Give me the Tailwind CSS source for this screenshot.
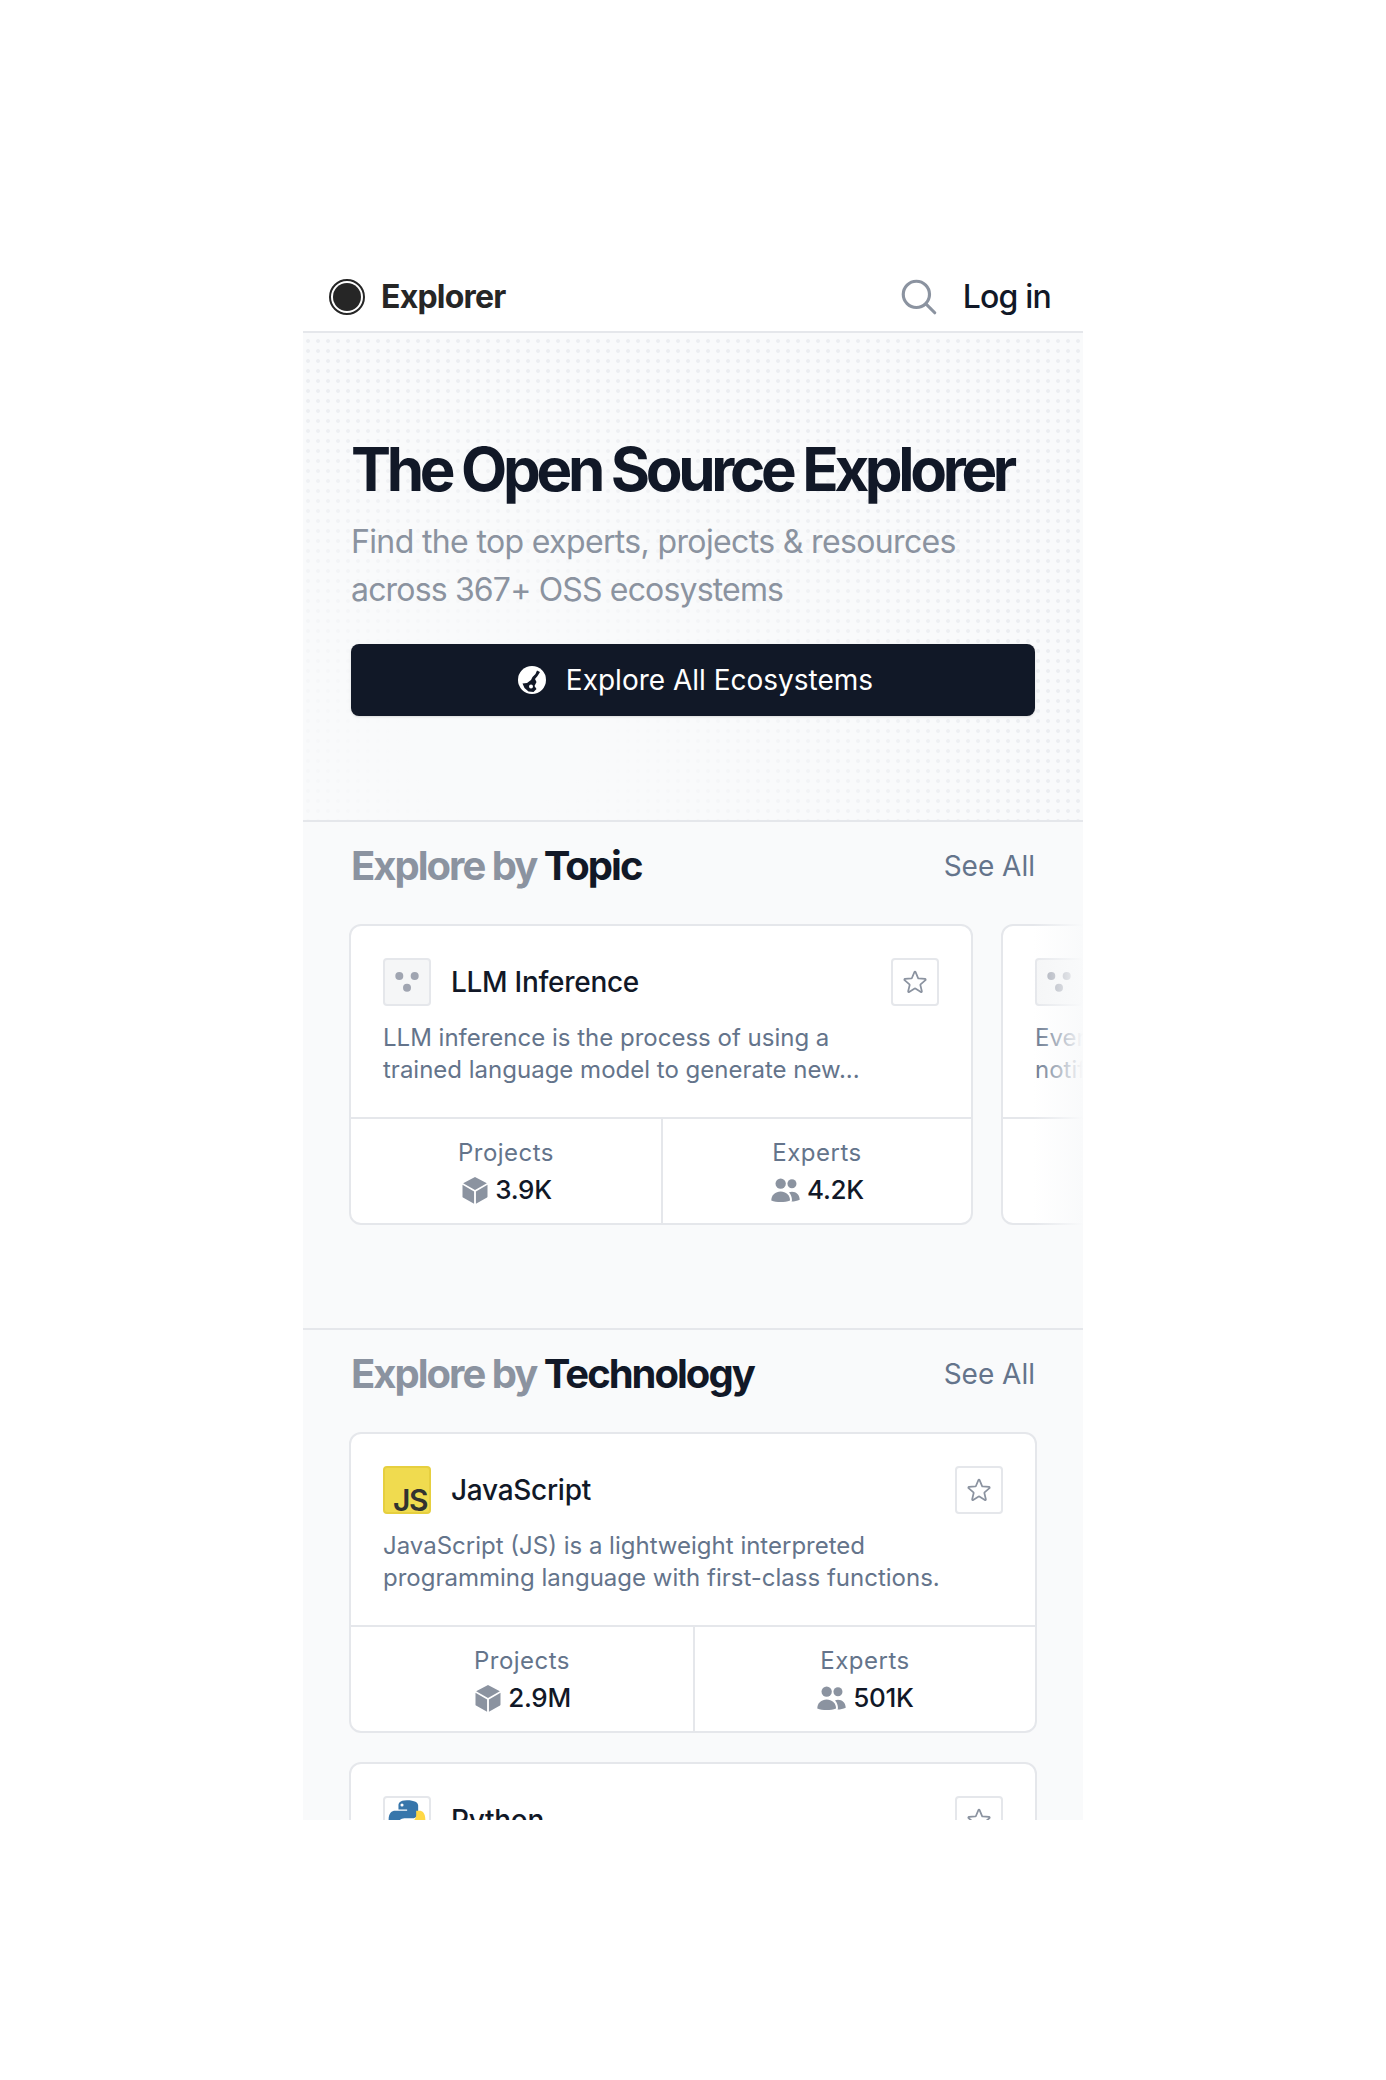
<!DOCTYPE html>
<html lang="en">
<head>
    <meta charset="UTF-8">
    <meta name="viewport" content="width=device-width, initial-scale=1.0">
    <title>Explorer</title>
    <script src="https://cdn.jsdelivr.net/npm/@tailwindcss/browser@4"></script>
</head>
<body class="bg-white font-['Inter',sans-serif] text-[#111827]">
    <div class="pt-[260px] pl-[303px]">
        <div class="w-[780px] h-[1560px] overflow-hidden bg-[#f9fafb]">
            <!-- header -->
            <header class="h-[73px] pt-[2px] bg-white border-b-2 border-[#e5e7eb] flex items-center justify-between pl-[26px] pr-[32px]">
                <div class="flex items-center gap-[16px]">
                    <svg class="w-[36px] h-[36px]" viewBox="0 0 36 36"><circle cx="18" cy="18" r="17" fill="#fff" stroke="#262626" stroke-width="2"/><circle cx="18" cy="18" r="14" fill="#262626"/></svg>
                    <span class="text-[32px] font-bold tracking-[-0.025em] text-[#262626]">Explorer</span>
                </div>
                <div class="flex items-center gap-[23px]">
                    <svg class="w-[42px] h-[42px] text-[#8b93a0]" fill="none" viewBox="0 0 24 24" stroke="currentColor" stroke-width="1.8"><path stroke-linecap="round" stroke-linejoin="round" d="M21 21l-5.197-5.197m0 0A7.5 7.5 0 105.196 5.196a7.5 7.5 0 0010.607 10.607z"/></svg>
                    <span class="text-[32px] font-medium tracking-[-0.025em] text-[#111827]">Log in</span>
                </div>
            </header>

            <!-- hero -->
            <section class="relative h-[489px] border-b-2 border-[#e5e7eb] px-[46px] pt-[106px]">
                <div class="absolute inset-0 bg-[radial-gradient(#eceef1_1.5px,transparent_2.3px)] bg-[length:10px_10px] bg-[position:0_3px]"></div>
                <div class="absolute inset-0 bg-[radial-gradient(ellipse_at_25%_85%,#f9fafb_10%,transparent_65%)]"></div>
                <div class="relative">
                    <h1 class="ml-[2px] text-[60px] leading-[60px] font-bold tracking-[-0.072em] text-[#111827] whitespace-nowrap">The Open Source Explorer</h1>
                    <p class="ml-[2px] mt-[19px] text-[32px] leading-[48px] tracking-[-0.02em] text-[#8b93a0]">Find the top experts, projects &amp; resources<br><span class="tracking-[-0.026em]">across 367+ OSS ecosystems</span></p>
                    <button class="mt-[30px] ml-[2px] pl-[5px] w-[684px] h-[72px] rounded-[8px] bg-[#111827] text-white text-[28px] flex items-center justify-center gap-[20px] shadow-sm">
                        <svg class="w-[28px] h-[28px]" viewBox="0 0 28 28"><circle cx="14" cy="14" r="14" fill="#fff"/><path d="M22 6l-3-1.500-1.500 3.500-3 3-1.500 3-4 3-4.500.5 2 4.500 4 3.500 5 .5 3-3-2-3 2-4-1.500-3 2.500-3z" fill="#111827"/><circle cx="13" cy="20.500" r="2" fill="#fff"/></svg>
                        Explore All Ecosystems
                    </button>
                </div>
            </section>

            <!-- topics -->
            <section class="h-[508px] border-b-2 border-[#e5e7eb] pt-[22px]">
                <div class="flex items-center justify-between px-[48px] h-[44px]">
                    <h2 class="text-[40px] font-bold tracking-[-0.05em] text-[#8b93a0]">Explore by <span class="text-[#111827]">Topic</span></h2>
                    <a class="text-[28px] text-[#64748b]">See All</a>
                </div>
                <div class="relative mt-[36px] flex gap-[28px] pl-[46px] overflow-hidden">
                    <div class="w-[624px] shrink-0 h-[301px] bg-white border-2 border-[#e5e7eb] rounded-[12px] flex flex-col">
                        <div class="px-[32px] pt-[32px] flex-1">
                            <div class="flex items-center justify-between">
                                <div class="flex items-center gap-[20px]">
                                    <div class="w-[48px] h-[48px] rounded-[4px] border-2 border-[#e5e7eb] bg-[#f5f6f7] flex items-center justify-center">
                                        <svg class="w-[24px] h-[24px]" viewBox="0 0 24 24" fill="#a0a5b1"><circle cx="4.300" cy="6" r="4"/><circle cx="19.700" cy="6" r="4"/><circle cx="12" cy="17.700" r="4"/></svg>
                                    </div>
                                    <span class="text-[28px] font-medium tracking-[-0.01em] text-[#111827]">LLM Inference</span>
                                </div>
                                <button class="w-[48px] h-[48px] rounded-[4px] border-2 border-[#e5e7eb] flex items-center justify-center">
                                    <svg class="w-[28px] h-[28px] text-[#8b93a0]" fill="none" viewBox="0 0 24 24" stroke="currentColor" stroke-width="1.5"><path stroke-linejoin="round" d="M11.48 3.5a.56.56 0 011.04 0l2.13 5.11a.56.56 0 00.48.35l5.52.44c.5.04.7.66.32.99l-4.2 3.6a.56.56 0 00-.18.56l1.28 5.38a.56.56 0 01-.84.61l-4.72-2.88a.56.56 0 00-.59 0l-4.73 2.88a.56.56 0 01-.84-.61l1.29-5.38a.56.56 0 00-.18-.56l-4.2-3.6a.56.56 0 01.32-.99l5.52-.44a.56.56 0 00.47-.35L11.48 3.5z"/></svg>
                                </button>
                            </div>
                            <p class="mt-[16px] text-[24px] leading-[32px] text-[#64748b]">LLM inference is the process of using a<br>trained language model to generate new...</p>
                        </div>
                        <div class="h-[106px] border-t-2 border-[#e5e7eb] grid grid-cols-2">
                            <div class="flex flex-col items-center justify-center">
                                <span class="text-[24px] leading-[32px] tracking-[0.02em] text-[#64748b]">Projects</span>
                                <span class="mt-[5px] flex items-center gap-[5px] text-[26px] leading-[32px] font-medium tracking-[-0.01em] text-[#111827]">
                                    <svg class="w-[30px] h-[30px] text-[#8b93a0]" viewBox="0 0 24 24" fill="currentColor"><path d="M12.38 1.700a.75.75 0 00-.76 0L2.500 6.500 12 11.900l9.500-5.400-9.120-4.800z"/><path d="M22 7.800l-9.250 5.300V23l8.870-5.060a.75.75 0 00.38-.65V7.800zM11.250 23v-9.900L2 7.800v9.500c0 .27.14.52.38.65L11.250 23z"/></svg>
                                    3.9K
                                </span>
                            </div>
                            <div class="border-l-2 border-[#e5e7eb] flex flex-col items-center justify-center">
                                <span class="text-[24px] leading-[32px] tracking-[0.02em] text-[#64748b]">Experts</span>
                                <span class="mt-[5px] flex items-center gap-[6px] text-[26px] leading-[32px] font-medium tracking-[-0.01em] text-[#111827]">
                                    <svg class="w-[31px] h-[31px] text-[#8b93a0]" viewBox="0 0 24 24" fill="currentColor"><circle cx="8.250" cy="7.500" r="4"/><circle cx="17" cy="7.500" r="3.500"/><path d="M1 20.500c0-4.200 3.200-7 7.250-7s7.250 2.800 7.250 7c-2 .8-4.600 1.200-7.250 1.200S3 21.300 1 20.500z"/><path d="M16.600 21.300c.2-.3.4-.6.4-1 0-2.300-.8-4.500-2.300-6 .7-.4 1.500-.6 2.300-.6 3.400 0 6 2.400 6 6.200-1.900.9-4 1.400-6.400 1.400z"/></svg>
                                    4.2K
                                </span>
                            </div>
                        </div>
                    </div>
                    <div class="w-[624px] shrink-0 h-[301px] bg-white border-2 border-[#e5e7eb] rounded-[12px] flex flex-col">
                        <div class="px-[32px] pt-[32px] flex-1">
                            <div class="w-[48px] h-[48px] rounded-[4px] border-2 border-[#e5e7eb] bg-[#f5f6f7] flex items-center justify-center">
                                <svg class="w-[24px] h-[24px]" viewBox="0 0 24 24" fill="#a0a5b1"><circle cx="4.300" cy="6" r="4"/><circle cx="19.700" cy="6" r="4"/><circle cx="12" cy="17.700" r="4"/></svg>
                            </div>
                            <p class="mt-[16px] text-[24px] leading-[32px] text-[#64748b] whitespace-nowrap">Every<br>notification</p>
                        </div>
                        <div class="h-[106px] border-t-2 border-[#e5e7eb]"></div>
                    </div>
                    <div class="absolute right-0 top-0 bottom-0 w-[50px] bg-gradient-to-r from-[#f9fafb]/0 to-[#f9fafb]"></div>
                </div>
            </section>

            <!-- technologies -->
            <section class="pt-[22px]">
                <div class="flex items-center justify-between px-[48px] h-[44px]">
                    <h2 class="text-[40px] font-bold tracking-[-0.05em] text-[#8b93a0]">Explore by <span class="text-[#111827]">Technology</span></h2>
                    <a class="text-[28px] text-[#64748b]">See All</a>
                </div>
                <div class="mt-[36px] px-[46px] flex flex-col gap-[29px]">
                    <div class="h-[301px] bg-white border-2 border-[#e5e7eb] rounded-[12px] flex flex-col">
                        <div class="px-[32px] pt-[32px] flex-1">
                            <div class="flex items-center justify-between">
                                <div class="flex items-center gap-[20px]">
                                    <div class="w-[48px] h-[48px] rounded-[4px] border-2 border-[#e6cf3f] bg-[#f0db4f] flex items-end justify-end pr-[2px] text-[30px] leading-[24px] font-semibold tracking-[-0.05em] text-[#323330]">JS</div>
                                    <span class="text-[28px] font-medium tracking-[-0.01em] text-[#111827]">JavaScript</span>
                                </div>
                                <button class="w-[48px] h-[48px] rounded-[4px] border-2 border-[#e5e7eb] flex items-center justify-center">
                                    <svg class="w-[28px] h-[28px] text-[#8b93a0]" fill="none" viewBox="0 0 24 24" stroke="currentColor" stroke-width="1.5"><path stroke-linejoin="round" d="M11.48 3.5a.56.56 0 011.04 0l2.13 5.11a.56.56 0 00.48.35l5.52.44c.5.04.7.66.32.99l-4.2 3.6a.56.56 0 00-.18.56l1.28 5.38a.56.56 0 01-.84.61l-4.72-2.88a.56.56 0 00-.59 0l-4.73 2.88a.56.56 0 01-.84-.61l1.29-5.38a.56.56 0 00-.18-.56l-4.2-3.6a.56.56 0 01.32-.99l5.52-.44a.56.56 0 00.47-.35L11.48 3.5z"/></svg>
                                </button>
                            </div>
                            <p class="mt-[16px] text-[24px] leading-[32px] text-[#64748b]">JavaScript (JS) is a lightweight interpreted<br>programming language with first-class functions.</p>
                        </div>
                        <div class="h-[106px] border-t-2 border-[#e5e7eb] grid grid-cols-2">
                            <div class="flex flex-col items-center justify-center">
                                <span class="text-[24px] leading-[32px] tracking-[0.02em] text-[#64748b]">Projects</span>
                                <span class="mt-[5px] flex items-center gap-[5px] text-[26px] leading-[32px] font-medium tracking-[-0.01em] text-[#111827]">
                                    <svg class="w-[30px] h-[30px] text-[#8b93a0]" viewBox="0 0 24 24" fill="currentColor"><path d="M12.38 1.700a.75.75 0 00-.76 0L2.500 6.500 12 11.900l9.500-5.400-9.120-4.800z"/><path d="M22 7.800l-9.250 5.300V23l8.870-5.060a.75.75 0 00.38-.65V7.800zM11.250 23v-9.900L2 7.800v9.500c0 .27.14.52.38.65L11.250 23z"/></svg>
                                    2.9M
                                </span>
                            </div>
                            <div class="border-l-2 border-[#e5e7eb] flex flex-col items-center justify-center">
                                <span class="text-[24px] leading-[32px] tracking-[0.02em] text-[#64748b]">Experts</span>
                                <span class="mt-[5px] flex items-center gap-[6px] text-[26px] leading-[32px] font-medium tracking-[-0.01em] text-[#111827]">
                                    <svg class="w-[31px] h-[31px] text-[#8b93a0]" viewBox="0 0 24 24" fill="currentColor"><circle cx="8.250" cy="7.500" r="4"/><circle cx="17" cy="7.500" r="3.500"/><path d="M1 20.500c0-4.200 3.200-7 7.250-7s7.250 2.800 7.250 7c-2 .8-4.600 1.200-7.250 1.200S3 21.300 1 20.500z"/><path d="M16.600 21.300c.2-.3.4-.6.4-1 0-2.300-.8-4.500-2.300-6 .7-.4 1.500-.6 2.300-.6 3.400 0 6 2.400 6 6.200-1.900.9-4 1.400-6.400 1.400z"/></svg>
                                    501K
                                </span>
                            </div>
                        </div>
                    </div>
                    <div class="h-[301px] bg-white border-2 border-[#e5e7eb] rounded-[12px] px-[32px] pt-[32px]">
                        <div class="flex items-center justify-between">
                            <div class="flex items-center gap-[20px]">
                                <div class="w-[48px] h-[48px] rounded-[4px] border-2 border-[#e5e7eb] flex items-center justify-center">
                                    <svg class="w-[42px] h-[42px]" viewBox="0 0 32 32"><path d="M15.900 1c-6 0-6.400 2.600-6.400 4v3h6.600v1H7c-2.600 0-5 1.600-5 7s2.200 7 4.500 7H9v-3.400c0-2.700 2.300-5 5-5h6.500c2.200 0 4-1.800 4-4V5c0-2.200-2.500-4-8.600-4z" fill="#3776ab"/><circle cx="12.200" cy="4.600" r="1.200" fill="#fff"/><path d="M16.100 31c6 0 6.400-2.600 6.400-4v-3h-6.600v-1H25c2.600 0 5-1.600 5-7s-2.200-7-4.500-7H23v3.400c0 2.700-2.300 5-5 5h-6.500c-2.200 0-4 1.800-4 4V27c0 2.200 2.500 4 8.600 4z" fill="#ffd845"/></svg>
                                </div>
                                <span class="text-[28px] font-medium tracking-[-0.01em] text-[#111827]">Python</span>
                            </div>
                            <button class="w-[48px] h-[48px] rounded-[4px] border-2 border-[#e5e7eb] flex items-center justify-center">
                                <svg class="w-[28px] h-[28px] text-[#8b93a0]" fill="none" viewBox="0 0 24 24" stroke="currentColor" stroke-width="1.5"><path stroke-linejoin="round" d="M11.48 3.5a.56.56 0 011.04 0l2.13 5.11a.56.56 0 00.48.35l5.52.44c.5.04.7.66.32.99l-4.2 3.6a.56.56 0 00-.18.56l1.28 5.38a.56.56 0 01-.84.61l-4.72-2.88a.56.56 0 00-.59 0l-4.73 2.88a.56.56 0 01-.84-.61l1.29-5.38a.56.56 0 00-.18-.56l-4.2-3.6a.56.56 0 01.32-.99l5.52-.44a.56.56 0 00.47-.35L11.48 3.5z"/></svg>
                            </button>
                        </div>
                    </div>
                </div>
            </section>
        </div>
    </div>
</body>
</html>
